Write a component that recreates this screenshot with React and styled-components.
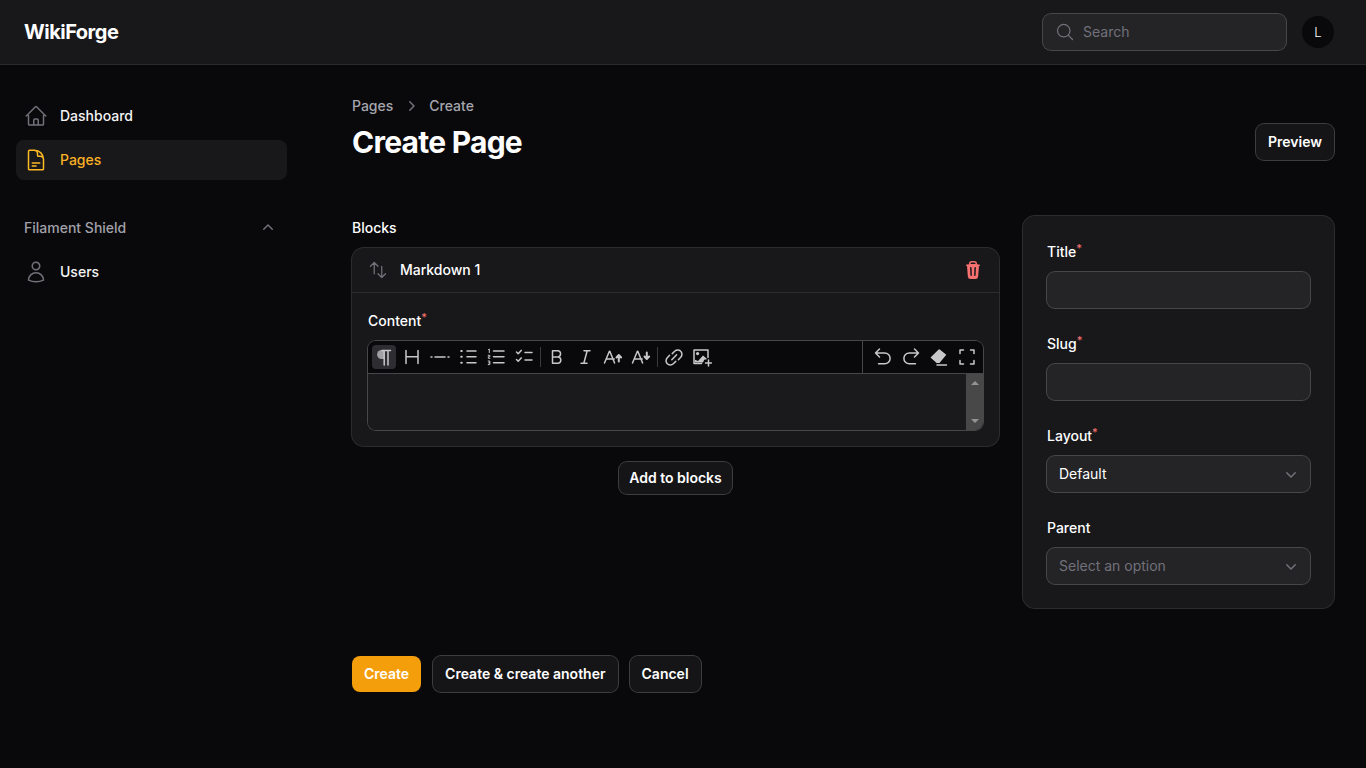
import styled, { createGlobalStyle } from "styled-components";
import {
  HiOutlineHome,
  HiOutlineDocumentText,
  HiOutlineUser,
  HiOutlineMagnifyingGlass,
  HiOutlineArrowsUpDown,
  HiMiniTrash,
  HiMiniChevronUp,
  HiMiniChevronDown,
  HiMiniChevronRight,
} from "react-icons/hi2";

const GlobalStyle = createGlobalStyle`
  * { box-sizing: border-box; }
  html, body { margin: 0; background: #09090b; }
  body {
    font-family: Inter, "Noto Sans", sans-serif;
    font-size: 14px;
    line-height: 20px;
    color: #fff;
  }
`;

const Page = styled.div`
  min-height: 768px;
  background: #09090b;
`;

const TopBar = styled.header`
  height: 65px;
  background: #18181b;
  border-bottom: 1px solid #2a2a2c;
  display: flex;
  align-items: center;
  padding: 0 32px 0 24px;
`;

const Logo = styled.div`
  font-size: 20px;
  line-height: 28px;
  font-weight: 700;
  letter-spacing: -0.5px;
  margin-right: auto;
`;

const Search = styled.div`
  width: 243px;
  height: 36px;
  margin-right: 16px;
  border-radius: 8px;
  background: #242427;
  box-shadow: 0 0 0 1px #47474a;
  display: flex;
  align-items: center;
  gap: 8px;
  padding-left: 12px;
  color: #71717a;
  svg { width: 20px; height: 20px; flex: none; }
`;

const Avatar = styled.div`
  width: 32px;
  height: 32px;
  border-radius: 50%;
  background: #09090b;
  display: flex;
  align-items: center;
  justify-content: center;
  font-size: 13px;
  font-weight: 300;
`;

const Body = styled.div`
  display: flex;
`;

const Sidebar = styled.aside`
  width: 304px;
  flex: none;
  padding: 31px 17px 0 16px;
`;

const NavItem = styled.div`
  height: 40px;
  display: flex;
  align-items: center;
  gap: 12px;
  padding: 0 8px;
  border-radius: 8px;
  margin-bottom: 4px;
  font-weight: 500;
  background: ${(p) => (p.$active ? "#18181a" : "transparent")};
  color: ${(p) => (p.$active ? "#fbb124" : "#f4f4f5")};
  svg {
    width: 24px;
    height: 24px;
    flex: none;
    color: ${(p) => (p.$active ? "#fbb924" : "#71717a")};
  }
`;

const NavGroup = styled.div`
  height: 20px;
  margin: 38px 0 14px;
  padding: 0 9px 0 8px;
  display: flex;
  align-items: center;
  justify-content: space-between;
  font-weight: 500;
  color: #a1a1aa;
  svg { width: 20px; height: 20px; color: #71717a; }
`;

const Main = styled.main`
  flex: 1;
  min-width: 0;
  padding: 31px 32px 0 48px;
`;

const Crumbs = styled.div`
  display: flex;
  align-items: center;
  gap: 8px;
  font-weight: 500;
  color: #a6a6ae;
  svg { width: 20px; height: 20px; color: #71717a; }
`;

const PageHead = styled.div`
  display: flex;
  justify-content: space-between;
  align-items: flex-end;
`;

const Title = styled.h1`
  margin: 8px 0 0;
  font-size: 30px;
  line-height: 36px;
  font-weight: 700;
  letter-spacing: -0.75px;
`;

const Button = styled.button`
  height: ${(p) => (p.$small ? "32px" : "36px")};
  padding: 0 ${(p) => (p.$small ? "10px" : "12px")};
  border: 0;
  border-radius: 8px;
  font: 600 14px/20px Inter, sans-serif;
  color: #fff;
  background: ${(p) => (p.$primary ? "#f59e0b" : "#151517")};
  box-shadow: ${(p) => (p.$primary ? "none" : "0 0 0 1px #3d3d3f")};
`;

const FormGrid = styled.div`
  display: grid;
  grid-template-columns: minmax(0, 1fr) 311px;
  column-gap: 24px;
  margin-top: 56px;
  align-items: start;
`;

const BlocksLabel = styled.div`
  margin: 2px 0 10px;
  font-weight: 500;
`;

const BlockCard = styled.div`
  background: #18181b;
  border-radius: 12px;
  box-shadow: 0 0 0 1px #2c2c2f;
`;

const BlockHead = styled.div`
  height: 45px;
  display: flex;
  align-items: center;
  gap: 12px;
  padding: 0 16px;
  border-bottom: 1px solid #2c2c2f;
  font-weight: 500;
  svg { width: 20px; height: 20px; flex: none; }
`;

const Handle = styled.span`
  display: flex;
  color: #71717a;
`;

const Delete = styled.span`
  display: flex;
  margin-left: auto;
  color: #f87171;
`;

const BlockBody = styled.div`
  padding: 16px;
`;

const Label = styled.div`
  height: 24px;
  display: flex;
  align-items: center;
  font-weight: 500;
  margin-bottom: 8px;
`;

const Req = styled.sup`
  color: #f87171;
  font-size: 11px;
  line-height: 0;
  font-weight: 500;
  position: relative;
  top: -4px;
`;

const Editor = styled.div`
  border-radius: 8px;
  box-shadow: 0 0 0 1px #47474a;
  overflow: hidden;
`;

const Toolbar = styled.div`
  height: 33px;
  display: flex;
  align-items: center;
  background: #09090b;
  border-bottom: 1px solid #47474a;
  padding-left: 4px;
`;

const ToolButton = styled.span`
  width: 24px;
  height: 24px;
  margin-right: 4px;
  flex: none;
  display: flex;
  align-items: center;
  justify-content: center;
  border-radius: 4px;
  color: #c8c8cb;
  background: ${(p) => (p.$active ? "#2e2e32" : "transparent")};
  svg {
    width: 20px;
    height: 20px;
    fill: none;
    stroke: currentColor;
    stroke-width: 1.5;
    stroke-linecap: round;
    stroke-linejoin: round;
  }
`;

const Sep = styled.i`
  width: 1px;
  height: 20px;
  margin: 0 4px 0 0;
  background: #3a3a3d;
`;

const ToolEnd = styled.div`
  height: 100%;
  margin-left: auto;
  padding-left: 8px;
  display: flex;
  align-items: center;
  border-left: 1px solid #47474a;
`;

const EditArea = styled.div`
  height: 56px;
  display: flex;
  background: #1a1a1c;
`;

const TextSpace = styled.div`
  flex: 1;
`;

const ScrollTrack = styled.div`
  width: 17px;
  background: #484849;
  display: flex;
  flex-direction: column;
  justify-content: space-between;
  align-items: center;
  padding: 7px 0;
`;

const Arrow = styled.i`
  width: 0;
  height: 0;
  border-left: 4px solid transparent;
  border-right: 4px solid transparent;
  border-${(p) => (p.$down ? "top" : "bottom")}: 4px solid #949496;
`;

const AddRow = styled.div`
  display: flex;
  justify-content: center;
  margin-top: 16px;
`;

const SideCard = styled.div`
  background: #18181b;
  border-radius: 12px;
  box-shadow: 0 0 0 1px #2c2c2f;
  padding: 24px;
  display: flex;
  flex-direction: column;
  gap: 24px;
`;

const Input = styled.div`
  height: 36px;
  border-radius: 8px;
  background: #242427;
  box-shadow: 0 0 0 1px #47474a;
  display: flex;
  align-items: center;
  justify-content: space-between;
  padding: 0 9px 0 12px;
  color: ${(p) => (p.$muted ? "#71717a" : "#fff")};
  svg { width: 20px; height: 20px; color: #71717a; }
`;

const Actions = styled.div`
  display: flex;
  gap: 12px;
  margin-top: 48px;
`;

const Filled = styled.g`
  fill: currentColor;
  stroke: none;
`;

const tools = [
  {
    name: "paragraph",
    active: true,
    d: (
      <>
        <path d="M16.5 3.6H8 M10.2 3.6V18 M14 3.6V18" />
        <Filled opacity="0.75">
          <path d="M10.2 3H7.6a4.5 4.5 0 0 0 0 9h2.6z" />
        </Filled>
      </>
    ),
  },
  { name: "heading", d: <path d="M4 3.5v13 M16 3.5v13 M4 9.8h12" /> },
  { name: "rule", d: <path d="M1 10h1 M5 10h10 M18 10h1" /> },
  {
    name: "bullets",
    d: (
      <>
        <path d="M9 4h9 M9 9.8h9 M9 15.8h9" />
        <path strokeWidth="2" d="M3.2 4h.6 M3.2 9.8h.6 M3.2 15.8h.6" />
      </>
    ),
  },
  {
    name: "ordered",
    d: (
      <>
        <path d="M7.5 4H18 M7.5 9.8H18 M7.5 15.8H18" />
        <path strokeWidth="1" d="M2.5 2.5l.8-.5v3.6 M2.2 8.3h1.6v1.5H2.3v1.5h1.6 M2.2 14h1.6v3.6H2.2 M2.6 15.8h1.2" />
      </>
    ),
  },
  {
    name: "checks",
    d: <path d="M2.5 5l1.7 1.7L7.2 3.4 M2.5 12.5l1.7 1.7 3-3.3 M11 5.5h7 M11 13h7" />,
  },
  { sep: true },
  {
    name: "bold",
    d: <path d="M5.5 3.8h5a3 3 0 0 1 0 6.1h-5z M5.5 9.9h5.7a3.2 3.2 0 0 1 0 6.3H5.5z" />,
  },
  { name: "italic", d: <path d="M9 3.8h6 M6 16.2h6 M12.2 3.8l-3.4 12.4" /> },
  {
    name: "size up",
    d: (
      <>
        <path d="M1.5 16 6.4 4.3h.4L11.6 16 M3.2 12h8" />
        <path strokeWidth="2" d="M15.8 14.5V9 M13.5 10.5l2.3-2.5 2.3 2.5" />
      </>
    ),
  },
  {
    name: "size down",
    d: (
      <>
        <path d="M1.5 16 6.4 4.3h.4L11.6 16 M3.2 12h8" />
        <path strokeWidth="2" d="M15.8 5.5V11 M13.5 9.5l2.3 2.5 2.3-2.5" />
      </>
    ),
  },
  { sep: true },
  {
    name: "link",
    d: <path d="M8.2 6.6 10.7 4.3a4.2 4.2 0 0 1 6 6l-2.3 2.4 M11.8 14.4l-2.5 2.3a4.2 4.2 0 0 1-6-6l2.3-2.4 M7.8 12.8l4.8-5" />,
  },
  {
    name: "image",
    d: (
      <>
        <path d="M9.5 16.4H2V3h14v7.5 M16.5 13v6 M13.5 16h6" />
        <Filled>
          <circle cx="5.6" cy="6.6" r="1.6" />
          <path d="M3 15.4v-2.6l3 1.2 5-5.6 3.8 3.3v.6l-2.6.5-1.2 2.6z" />
        </Filled>
      </>
    ),
  },
];

const endTools = [
  {
    name: "undo",
    d: <path d="M6.5 2 2.5 6l4 4 M2.5 6h9.2a5 5 0 0 1 0 10.8H5.5" />,
  },
  {
    name: "redo",
    d: <path d="M13.5 2l4 4-4 4 M17.5 6H8.3a5 5 0 0 0 0 10.8h6.2" />,
  },
  {
    name: "eraser",
    d: (
      <>
        <path d="M8 18h9.5" />
        <Filled>
          <path d="M1.5 10.6 9.4 2.7a1.2 1.2 0 0 1 1.7 0l6.2 5-6.8 8.3H7.6z" />
        </Filled>
      </>
    ),
  },
  {
    name: "fullscreen",
    d: <path d="M3 6.5V3h3.5 M13.5 3H17v3.5 M17 13.5V17h-3.5 M6.5 17H3v-3.5" />,
  },
];

const renderTool = (tool, i) =>
  tool.sep ? (
    <Sep key={i} />
  ) : (
    <ToolButton key={tool.name} $active={tool.active} title={tool.name}>
      <svg viewBox="0 0 20 20">{tool.d}</svg>
    </ToolButton>
  );

const Field = ({ label, required, children }) => (
  <div>
    <Label>
      {label}
      {required && <Req>*</Req>}
    </Label>
    {children}
  </div>
);

export default function App() {
  return (
    <Page>
      <GlobalStyle />
      <TopBar>
        <Logo>WikiForge</Logo>
        <Search>
          <HiOutlineMagnifyingGlass />
          Search
        </Search>
        <Avatar>L</Avatar>
      </TopBar>
      <Body>
        <Sidebar>
          <NavItem>
            <HiOutlineHome />
            Dashboard
          </NavItem>
          <NavItem $active>
            <HiOutlineDocumentText />
            Pages
          </NavItem>
          <NavGroup>
            Filament Shield
            <HiMiniChevronUp />
          </NavGroup>
          <NavItem>
            <HiOutlineUser />
            Users
          </NavItem>
        </Sidebar>
        <Main>
          <PageHead>
            <div>
              <Crumbs>
                Pages
                <HiMiniChevronRight />
                Create
              </Crumbs>
              <Title>Create Page</Title>
            </div>
            <Button>Preview</Button>
          </PageHead>
          <FormGrid>
            <div>
              <BlocksLabel>Blocks</BlocksLabel>
              <BlockCard>
                <BlockHead>
                  <Handle>
                    <HiOutlineArrowsUpDown />
                  </Handle>
                  Markdown 1
                  <Delete>
                    <HiMiniTrash />
                  </Delete>
                </BlockHead>
                <BlockBody>
                  <Label>
                    Content
                    <Req>*</Req>
                  </Label>
                  <Editor>
                    <Toolbar>
                      {tools.map(renderTool)}
                      <ToolEnd>{endTools.map(renderTool)}</ToolEnd>
                    </Toolbar>
                    <EditArea>
                      <TextSpace />
                      <ScrollTrack>
                        <Arrow />
                        <Arrow $down />
                      </ScrollTrack>
                    </EditArea>
                  </Editor>
                </BlockBody>
              </BlockCard>
              <AddRow>
                <Button $small>Add to blocks</Button>
              </AddRow>
            </div>
            <SideCard>
              <Field label="Title" required>
                <Input />
              </Field>
              <Field label="Slug" required>
                <Input />
              </Field>
              <Field label="Layout" required>
                <Input>
                  Default
                  <HiMiniChevronDown />
                </Input>
              </Field>
              <Field label="Parent">
                <Input $muted>
                  Select an option
                  <HiMiniChevronDown />
                </Input>
              </Field>
            </SideCard>
          </FormGrid>
          <Actions>
            <Button $primary>Create</Button>
            <Button>Create &amp; create another</Button>
            <Button>Cancel</Button>
          </Actions>
        </Main>
      </Body>
    </Page>
  );
}
